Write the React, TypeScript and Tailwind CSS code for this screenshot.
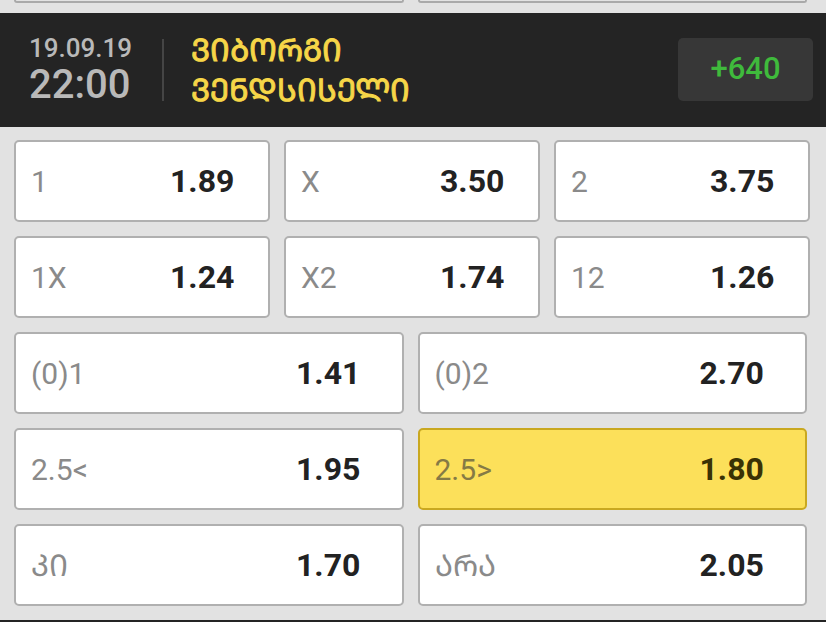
import React from 'react'

type Odd = { label: string; value: string; active?: boolean }

const threeRows: Odd[][] = [
    [{ label: '1', value: '1.89' }, { label: 'X', value: '3.50' }, { label: '2', value: '3.75' }],
    [{ label: '1X', value: '1.24' }, { label: 'X2', value: '1.74' }, { label: '12', value: '1.26' }],
]

const twoRows: Odd[][] = [
    [{ label: '(0)1', value: '1.41' }, { label: '(0)2', value: '2.70' }],
    [{ label: '2.5<', value: '1.95' }, { label: '2.5>', value: '1.80', active: true }],
    [{ label: 'ᲙᲘ', value: '1.70' }, { label: 'ᲐᲠᲐ', value: '2.05' }],
]

const OddCard = ({ odd, wide }: { odd: Odd; wide?: boolean }) => {
    return (
        <div
            className={`flex items-center h-[82px] rounded-[5px] border-2 pl-[15px] ${
                odd.active ? 'bg-[#fce05a] border-[#c9a820]' : 'bg-white border-[#b0b0b0]'
            }`}
        >
            <span
                className={`${wide ? 'w-[265px]' : 'w-[139px]'} shrink-0 text-[30px] ${
                    odd.active ? 'text-[#857a45]' : 'text-[#8a8a8a]'
                }`}
            >
                {odd.label}
            </span>
            <span className={`text-[32px] font-bold ${odd.active ? 'text-[#3a3204]' : 'text-[#222222]'}`}>
                {odd.value}
            </span>
        </div>
    )
}

const App = () => {
    return (
        <div
            className="w-[826px] h-[622px] overflow-hidden bg-[#e2e2e2] flex flex-col"
            style={{ fontFamily: 'Roboto, "DejaVu Sans", sans-serif' }}
        >
            {/* tail of the previous match */}
            <div className="h-[13px] shrink-0 pl-[14px] pr-[19px] grid grid-cols-2 gap-[14px] items-start">
                <div className="h-[3px] bg-[#e2e2e2] border-b-2 border-x-2 border-[#a9a9a9] rounded-b-[5px]" />
                <div className="h-[3px] bg-[#e2e2e2] border-b-2 border-x-2 border-[#a9a9a9] rounded-b-[5px]" />
            </div>

            {/* header */}
            <div className="h-[114px] shrink-0 bg-[#242424] flex items-center pl-[29px] pr-[13px]">
                <div className="flex flex-col leading-none text-[#b9b9b9] font-medium">
                    <span className="text-[26px]">19.09.19</span>
                    <span className="text-[40px] mt-[4px]">22:00</span>
                </div>
                <div className="w-[2px] h-[62px] bg-[#454545] ml-[30px] mr-[27px]" />
                <div className="flex flex-col text-[#f6d648] text-[31px] leading-[40px] font-['DejaVu_Sans',sans-serif] [-webkit-text-stroke:1px_#f6d648]">
                    <span>ᲕᲘᲑᲝᲠᲒᲘ</span>
                    <span>ᲕᲔᲜᲓᲡᲘᲡᲔᲚᲘ</span>
                </div>
                <div className="ml-auto w-[135px] h-[63px] rounded-[5px] bg-[#373737] flex items-center justify-center text-[31px] font-medium text-[#3fba3c] mb-[1px]">
                    +640
                </div>
            </div>

            {/* odds */}
            <div className="flex flex-col gap-[14px] pt-[13px] pl-[14px]">
                {threeRows.map((row, i) => (
                    <div key={i} className="grid grid-cols-3 gap-[14px] pr-[16px]">
                        {row.map((odd) => (
                            <OddCard key={odd.label} odd={odd} />
                        ))}
                    </div>
                ))}
                {twoRows.map((row, i) => (
                    <div key={i} className="grid grid-cols-2 gap-[14px] pr-[19px]">
                        {row.map((odd) => (
                            <OddCard key={odd.label} odd={odd} wide />
                        ))}
                    </div>
                ))}
            </div>

            <div className="mt-auto h-[2px] bg-[#242424]" />
        </div>
    )
}

export default App
